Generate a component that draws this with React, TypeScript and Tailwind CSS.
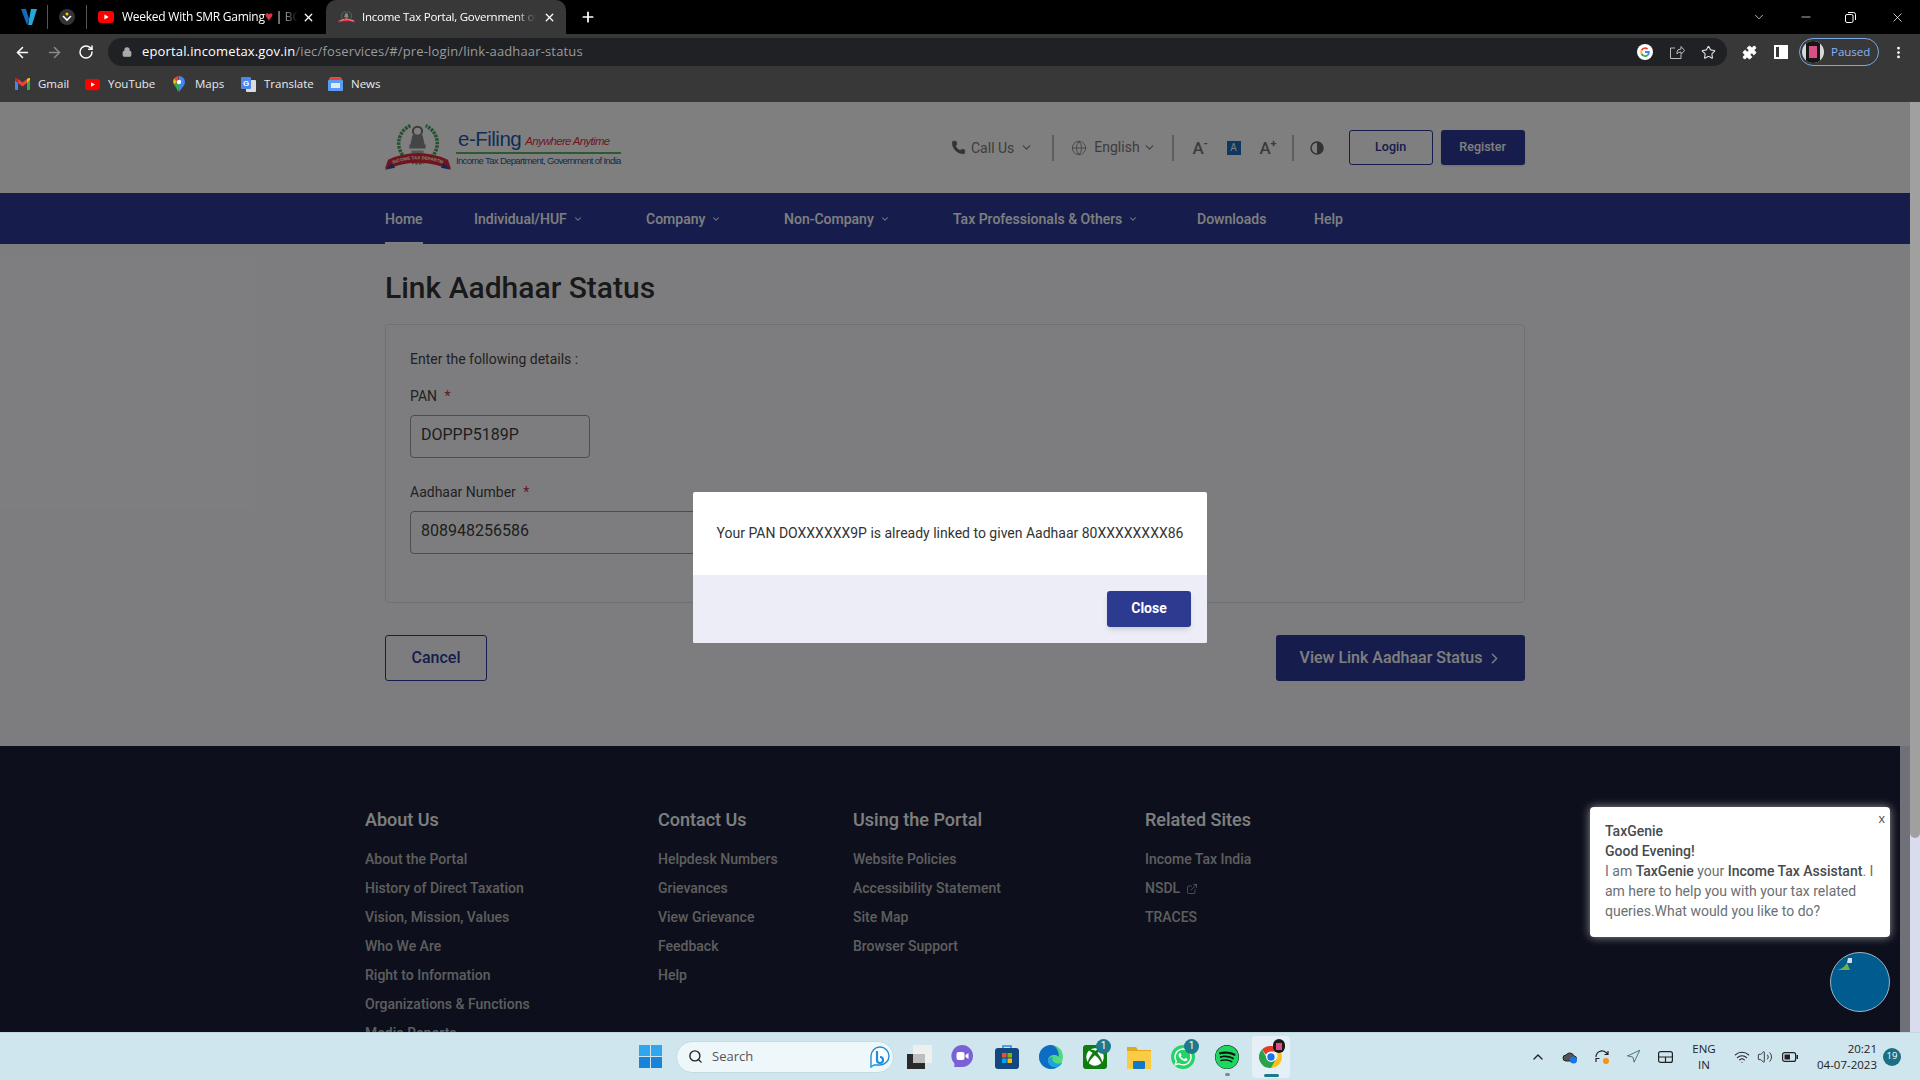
import React from "react";
import { Phone, Globe, ChevronDown, ChevronRight, ChevronUp, Search, Lock, ArrowLeft, ArrowRight, RotateCw, X, Plus, Minus, Star, Puzzle, MoreVertical, Wifi, Volume2, ExternalLink, Navigation } from "lucide-react";
import { FaWhatsapp, FaSpotify, FaXbox } from "react-icons/fa";

const sans = "font-['Roboto','Liberation_Sans',sans-serif]";
const ui = "font-['Open_Sans','Noto_Sans',sans-serif]";

function YT({ s = 15 }: { s?: number }) {
  return (
    <svg width={s} height={s} viewBox="0 0 16 16">
      <rect x="0" y="2" width="16" height="12" rx="3" fill="#f00" />
      <path d="M6.4 5.5v5L10.6 8z" fill="#fff" />
    </svg>
  );
}
function Emblem({ s = 16, id }: { s?: number; id: string }) {
  return (
    <svg width={Math.round((s * 65) / 46)} height={s} viewBox="0 0 65 46">
      <path d="M25 1.500a19 19 0 1 0 15 0" fill="none" stroke="#4aa35a" strokeWidth="3.5" strokeDasharray="2.5 1" />
      <circle cx="32" cy="7" r="4.500" fill="none" stroke="#777" strokeWidth="2" />
      <path d="M27 11h10l2 9H25zM24 20h16v4H24z" fill="#8a8a8a" />
      <path d="M26 26h12v3H26z" fill="#aaa" />
      <path d="M3 35q29-13 59 0l3 9-6-1q-27-10-53 0l-6 1z" fill="#e02a3a" />
      <path d="M0 45l7-6 3 4zM65 45l-7-6-3 4z" fill="#2a4aa0" />
      <defs>
        <path id={id} d="M7 39.500q25-10 51 0" />
      </defs>
      <text fontSize="4.4" fontWeight="700" fill="#fff" fontFamily="Liberation Sans">
        <textPath href={`#${id}`} startOffset="1">INCOME TAX DEPARTMENT</textPath>
      </text>
    </svg>
  );
}
function ChromeLogo({ s = 24 }: { s?: number }) {
  return (
    <svg width={s} height={s} viewBox="0 0 24 24">
      <path d="M12 1a11 11 0 0 1 9.500 5.500H12a5.500 5.500 0 0 0-5 3.200L3 4.500A11 11 0 0 1 12 1z" fill="#e33b2e" />
      <path d="M21.500 6.500A11 11 0 0 1 12 23l4.800-8.200a5.500 5.500 0 0 0 0-8.300z" fill="#fbc116" />
      <path d="M12 23A11 11 0 0 1 3 4.500l4.700 8.200a5.500 5.500 0 0 0 9 2.100L12 23z" fill="#2aa24a" />
      <circle cx="12" cy="12" r="4.300" fill="#1a73e8" stroke="#fff" strokeWidth="1.200" />
    </svg>
  );
}
function GoogleG({ s = 16 }: { s?: number }) {
  return (
    <svg width={s} height={s} viewBox="0 0 16 16">
      <circle cx="8" cy="8" r="8" fill="#fff" />
      <path d="M8 3.200a4.800 4.800 0 0 1 3.200 1.200l-1.200 1.200A3 3 0 0 0 5.200 7L3.800 5.800A4.800 4.800 0 0 1 8 3.200z" fill="#ea4335" />
      <path d="M3.800 5.800 5.200 7a3 3 0 0 0 0 2l-1.400 1.200a4.800 4.800 0 0 1 0-4.400z" fill="#fbbc05" />
      <path d="M3.800 10.200 5.200 9A3 3 0 0 0 10 10.600l1.300 1.100A4.800 4.800 0 0 1 3.800 10.200z" fill="#34a853" />
      <path d="M12.800 8c0-.3 0-.6-.1-.9H8v1.800h2.700a2.300 2.300 0 0 1-.7 1.700l1.300 1.100A4.800 4.800 0 0 0 12.800 8z" fill="#4285f4" />
    </svg>
  );
}
function Badge({ n }: { n: string }) {
  return (
    <span className={`absolute -right-[4px] -top-[6px] flex h-[15px] w-[15px] items-center justify-center rounded-full bg-[#1c7a8c] text-[10px] leading-none text-white ${sans}`}>{n}</span>
  );
}

function TabBar() {
  return (
    <div className="flex h-[34px] items-center bg-black text-white">
      <div className="flex w-[47px] justify-center pl-[10px]">
        <svg width="18" height="18" viewBox="0 0 18 18">
          <path d="M1 1h5l3 10-2 6z" fill="#1668b8" />
          <path d="M11 1h6l-5 16H8z" fill="#25a7d8" />
        </svg>
      </div>
      <div className="h-[24px] w-px bg-[#555]" />
      <div className="flex w-[38px] justify-center">
        <div className="flex h-[16px] w-[16px] items-center justify-center rounded-full bg-[#333]">
          <svg width="10" height="10" viewBox="0 0 10 10">
            <circle cx="5" cy="2" r="1.500" fill="#f2c200" />
            <path d="M1 4l4 4 4-4" stroke="#fff" strokeWidth="1.600" fill="none" />
          </svg>
        </div>
      </div>
      <div className="h-[24px] w-px bg-[#555]" />
      <div className="ml-[11px] flex w-[228px] items-center">
        <YT s={16} />
        <span className={`ml-[8px] w-[176px] overflow-hidden whitespace-nowrap text-[12px] tracking-[-0.25px] [mask-image:linear-gradient(90deg,#000_88%,transparent)] ${ui}`}>Weeked With SMR Gaming<span className="text-[14px] leading-none text-[#e3344a]">♥</span> | BGMI Live</span>
        <X size={13} strokeWidth={2.4} className="ml-[4px]" />
      </div>
      <div className="flex h-[34px] w-[240px] items-center rounded-t-[10px] bg-[#383838] pl-[12px]">
        <Emblem s={12} id="favRibbon" />
        <span className={`ml-[7px] w-[174px] overflow-hidden whitespace-nowrap text-[11.5px] tracking-[-0.25px] [mask-image:linear-gradient(90deg,#000_88%,transparent)] ${ui}`}>Income Tax Portal, Government of India</span>
        <X size={13} strokeWidth={2.4} className="ml-[7px]" />
      </div>
      <Plus size={16} strokeWidth={2.6} className="ml-[14px]" />
      <div className="ml-auto flex items-center text-white">
        <ChevronDown size={14} strokeWidth={1.2} className="mr-[33px]" />
        <Minus size={14} strokeWidth={1.2} className="mr-[32px]" />
        <svg width="11" height="11" viewBox="0 0 11 11" className="mr-[34px]">
          <rect x=".5" y="2.500" width="7.500" height="8" rx="1.500" fill="none" stroke="#fff" />
          <path d="M3 .5h5.500a2 2 0 0 1 2 2V8" fill="none" stroke="#fff" />
        </svg>
        <X size={15} strokeWidth={1.2} className="mr-[15px]" />
      </div>
    </div>
  );
}

function Toolbar() {
  return (
    <div className="flex h-[36px] items-center bg-[#383838] text-white">
      <ArrowLeft size={17} strokeWidth={2.2} className="ml-[14px]" />
      <ArrowRight size={17} strokeWidth={2.2} className="ml-[15px] text-[#888]" />
      <RotateCw size={16} strokeWidth={2.2} className="ml-[15px]" />
      <div className="ml-[14px] flex h-[28px] w-[1619px] items-center rounded-full bg-[#202124] pl-[14px]">
        <Lock size={10} strokeWidth={3} fill="#aaa" className="text-[#aaa]" />
        <span className={`ml-[10px] whitespace-nowrap text-[13px] tracking-[0.15px] ${ui}`}>
          eportal.incometax.gov.in<span className="text-[#9a9b9d]">/iec/foservices/#/pre-login/link-aadhaar-status</span>
        </span>
        <div className="ml-auto flex items-center pr-[11px]">
          <GoogleG s={16} />
          <svg width="16" height="16" viewBox="0 0 16 16" className="ml-[16px]" fill="none" stroke="#bbb">
            <path d="M8 10V8q0-3 4-3V2.500l3.500 4-3.500 4V8q-3 0-4 2z" />
            <path d="M6 4H1.500v10.500h10.500V11" />
          </svg>
          <Star size={15} strokeWidth={1.8} className="ml-[16px] text-[#ddd]" />
        </div>
      </div>
      <Puzzle size={15} fill="#fff" strokeWidth={1.5} className="ml-[15px]" />
      <div className="ml-[17px] flex h-[14px] w-[14px] justify-end border-[2px] border-white bg-[#383838]">
        <div className="h-full w-[7px] bg-white" />
      </div>
      <div className="ml-[11px] flex h-[28px] w-[80px] items-center rounded-full border border-[#7aa7e8] pl-[2px]">
        <div className="relative flex h-[22px] w-[22px] items-center justify-center overflow-hidden rounded-full bg-[#d8d8d8]">
          <div className="h-[22px] w-[14px] bg-[#161616]" />
          <div className="absolute h-[12px] w-[8px] bg-[#d94f86]" />
        </div>
        <span className={`ml-[7px] text-[11.5px] text-[#8ab4f8] ${ui}`}>Paused</span>
      </div>
      <MoreVertical size={15} strokeWidth={2.4} className="ml-[12px]" />
    </div>
  );
}

function Bookmark({ icon, label, w }: { icon: React.ReactNode; label: string; w: string }) {
  return (
    <div className={`flex items-center ${w}`}>
      <span className="flex w-[16px] justify-center">{icon}</span>
      <span className={`ml-[8px] whitespace-nowrap text-[11.5px] text-[#e8eaed] ${ui}`}>{label}</span>
    </div>
  );
}

function Bookmarks() {
  return (
    <div className="flex h-[32px] items-center bg-[#383838] pb-[4px] pl-[14px]">
      <Bookmark w="w-[70px]" label="Gmail" icon={
        <svg width="15" height="12" viewBox="0 0 15 12">
          <path d="M0 2v9a1 1 0 0 0 1 1h2V5z" fill="#4285f4" />
          <path d="M15 2v9a1 1 0 0 1-1 1h-2V5z" fill="#34a853" />
          <path d="M3 5 7.500 8.500 12 5V1L7.500 4.500 3 1z" fill="#ea4335" />
          <path d="M0 2 3 5V1L2 .3A1.200 1.200 0 0 0 0 2z" fill="#c5221f" />
          <path d="M15 2l-3 3V1l1-.7A1.200 1.200 0 0 1 15 2z" fill="#fbbc04" />
        </svg>
      } />
      <Bookmark w="w-[87px]" label="YouTube" icon={<YT s={15} />} />
      <Bookmark w="w-[69px]" label="Maps" icon={
        <svg width="12" height="16" viewBox="0 0 12 16">
          <path d="M6 0a6 6 0 0 1 6 6q0 3-3 6l-3 4-1-6z" fill="#4285f4" />
          <path d="M6 0a6 6 0 0 0-5 2.600L4 6z" fill="#ea4335" />
          <path d="M1 2.600A6 6 0 0 0 1 8.500L4 6z" fill="#fbbc04" />
          <path d="M1 8.500 4 6l3 2-2 8q-1-3-4-7.500z" fill="#34a853" />
          <circle cx="6" cy="6" r="2.200" fill="#fff" />
        </svg>
      } />
      <Bookmark w="w-[87px]" label="Translate" icon={
        <svg width="15" height="15" viewBox="0 0 15 15">
          <rect x="5" y="3" width="10" height="12" rx="1" fill="#dcdcdc" />
          <rect x="0" y="0" width="10" height="12" rx="1" fill="#4f86ec" />
          <text x="2" y="9" fontSize="8" fontWeight="700" fill="#fff" fontFamily="Liberation Sans">G</text>
        </svg>
      } />
      <Bookmark w="w-[70px]" label="News" icon={
        <svg width="15" height="14" viewBox="0 0 15 14">
          <rect x="2" y="0" width="11" height="6" rx="1" fill="#34a853" />
          <rect x="1" y="1" width="13" height="5" fill="#ea4335" />
          <rect x="0" y="3" width="15" height="11" rx="1" fill="#5b9bf0" />
          <rect x="3" y="6" width="9" height="5" fill="#dbe9fb" />
        </svg>
      } />
    </div>
  );
}

function SiteHeader() {
  return (
    <div className="flex h-[91px] items-center bg-white pl-[385px]">
      <Emblem s={47} id="logoRibbon" />
      <div className="ml-[5px] flex w-[165px] flex-col pb-[2px]">
        <div className="flex h-[24px] items-end pl-[2px]">
          <span className="font-['Liberation_Sans',sans-serif] text-[20.5px] leading-[24px] tracking-[-0.5px] text-[#1c5ab0]">e-Filing</span>
          <span className="ml-[4px] whitespace-nowrap font-['Liberation_Sans',sans-serif] text-[11.5px] italic leading-[20px] tracking-[-0.7px] text-[#e0303e]">Anywhere Anytime</span>
        </div>
        <div className="mt-[1px] h-[2px] bg-[#5fb45f]" />
        <span className="mt-[1px] whitespace-nowrap font-['Liberation_Sans',sans-serif] text-[9.5px] leading-[12px] tracking-[-0.65px] text-[#2a5a90]">Income Tax Department, Government of India</span>
      </div>
      <div className={`ml-[330px] flex items-center text-[14px] text-[#7b7b7b] ${sans}`}>
        <Phone size={15} fill="#666" strokeWidth={1} className="text-[#666]" />
        <span className="ml-[5px] pt-[2px]">Call Us</span>
        <ChevronDown size={13} className="ml-[6px]" />
        <div className="ml-[19px] h-[26px] w-[2px] bg-[#bdbdbd]" />
        <Globe size={16} strokeWidth={1.2} className="ml-[17px]" />
        <span className="ml-[7px]">English</span>
        <ChevronDown size={13} className="ml-[3px]" />
        <div className="ml-[16px] h-[26px] w-[2px] bg-[#bdbdbd]" />
        <span className="relative ml-[19px] w-[15px] text-[17px] font-medium leading-[20px] text-[#777]">A<span className="absolute -top-[4px] left-[11px] text-[11px] font-bold">-</span></span>
        <span className="ml-[19px] flex h-[14px] w-[14px] items-center justify-center bg-[#1f6fc0] text-[10px] text-white">A</span>
        <span className="relative ml-[19px] w-[15px] text-[17px] font-medium leading-[20px] text-[#777]">A<span className="absolute -top-[4px] left-[11px] text-[11px] font-bold">+</span></span>
        <div className="ml-[17px] h-[26px] w-[2px] bg-[#bdbdbd]" />
        <svg width="14" height="14" viewBox="0 0 14 14" className="ml-[16px]">
          <circle cx="7" cy="7" r="6" fill="none" stroke="#666" strokeWidth="1.500" />
          <path d="M7 1a6 6 0 0 1 0 12z" fill="#666" />
        </svg>
        <div className="ml-[25px] flex h-[35px] w-[84px] items-center justify-center rounded-[3px] border border-[#2c3a98] text-[12.5px] font-medium text-[#2c3a98]">Login</div>
        <div className="ml-[8px] flex h-[35px] w-[84px] items-center justify-center rounded-[3px] bg-[#2c3a98] text-[12.5px] font-medium text-white shadow-sm">Register</div>
      </div>
    </div>
  );
}

function NavItem({ label, w, caret, active }: { label: string; w: string; caret?: boolean; active?: boolean }) {
  return (
    <div className={`flex h-full ${w}`}>
      <div className={`flex h-full items-center border-b-[2px] pt-[4px] ${active ? "border-white" : "border-transparent"}`}>
        <span>{label}</span>
        {caret && <ChevronDown size={10} strokeWidth={2.5} className="mb-[2px] ml-[6px]" />}
      </div>
    </div>
  );
}

function Nav() {
  return (
    <div className={`flex h-[51px] bg-[#2c3a98] pl-[385px] text-[14px] font-medium text-white ${sans}`}>
      <NavItem label="Home" w="w-[89px]" active />
      <NavItem label="Individual/HUF" w="w-[172px]" caret />
      <NavItem label="Company" w="w-[138px]" caret />
      <NavItem label="Non-Company" w="w-[169px]" caret />
      <NavItem label="Tax Professionals & Others" w="w-[244px]" caret />
      <NavItem label="Downloads" w="w-[117px]" />
      <NavItem label="Help" w="w-[60px]" />
    </div>
  );
}

function Body() {
  return (
    <div className={`h-[502px] bg-[#fbfbff] pl-[385px] ${sans}`}>
      <div className="h-[80px] pt-[24px] text-[30px] font-medium leading-[40px] text-[#333]">Link Aadhaar Status</div>
      <div className="h-[279px] w-[1140px] rounded-[4px] border border-[#dfe1ee] bg-[#fbfbff] pl-[24px] pt-[24px] text-[14px] text-[#444]">
        <div className="leading-[20px]">Enter the following details :</div>
        <div className="mt-[17px] leading-[20px]">PAN <span className="ml-[4px] text-[#c9304a]">*</span></div>
        <div className="mt-[9px] flex h-[43px] w-[180px] items-center rounded-[4px] border border-[#9a9a9a] pb-[3px] pl-[10px] text-[16px] text-[#3d3d3d]">DOPPP5189P</div>
        <div className="mt-[24px] leading-[20px]">Aadhaar Number <span className="ml-[4px] text-[#c9304a]">*</span></div>
        <div className="mt-[9px] flex h-[43px] w-[400px] items-center rounded-[4px] border border-[#9a9a9a] pb-[3px] pl-[10px] text-[16px] text-[#3d3d3d]">808948256586</div>
      </div>
      <div className="mt-[32px] flex w-[1140px] justify-between text-[16px] font-medium">
        <div className="flex h-[46px] w-[102px] items-center justify-center rounded-[3px] border border-[#2c3a98] text-[#2c3a98]">Cancel</div>
        <div className="flex h-[46px] w-[249px] items-center justify-center rounded-[3px] bg-[#2c3a98] pl-[2px] text-white">
          View Link Aadhaar Status
          <ChevronRight size={17} strokeWidth={2} className="ml-[4px]" />
        </div>
      </div>
    </div>
  );
}

function FooterCol({ title, links, w }: { title: string; links: React.ReactNode[]; w: string }) {
  return (
    <div className={w}>
      <div className="text-[18px] font-medium leading-[24px] text-white">{title}</div>
      <div className="mt-[13px] text-[14px] font-medium text-[#bdbdbd]">
        {links.map((l, i) => (
          <div key={i} className="flex h-[29px] items-center">{l}</div>
        ))}
      </div>
    </div>
  );
}

function Footer() {
  return (
    <div className="h-[286px] bg-[#dfe0f0]">
      <div className={`flex h-[286px] w-[1900px] overflow-hidden bg-[#1a2038] pl-[365px] pt-[62px] ${sans}`}>
        <FooterCol w="w-[293px]" title="About Us" links={["About the Portal", "History of Direct Taxation", "Vision, Mission, Values", "Who We Are", "Right to Information", "Organizations & Functions", "Media Reports"]} />
        <FooterCol w="w-[195px]" title="Contact Us" links={["Helpdesk Numbers", "Grievances", "View Grievance", "Feedback", "Help"]} />
        <FooterCol w="w-[292px]" title="Using the Portal" links={["Website Policies", "Accessibility Statement", "Site Map", "Browser Support"]} />
        <FooterCol w="w-[200px]" title="Related Sites" links={[
          "Income Tax India",
          <span key="n" className="flex items-center">NSDL <ExternalLink size={12} strokeWidth={1.5} className="ml-[6px]" /></span>,
          "TRACES",
        ]} />
      </div>
    </div>
  );
}

function Modal() {
  return (
    <div className={`absolute inset-0 z-10 flex items-center justify-center bg-black/50 pr-[10px] ${sans}`}>
      <div className="h-[151px] w-[514px] overflow-hidden rounded-[2px] bg-white">
        <div className="flex h-[83px] items-center justify-center pt-[1px] text-[14px] text-[#333]">
          Your PAN DOXXXXXX9P is already linked to given Aadhaar 80XXXXXXXX86
        </div>
        <div className="flex h-[68px] items-start justify-end bg-[#ecedf6] pr-[16px] pt-[16px]">
          <div className="flex h-[36px] w-[84px] items-center justify-center rounded-[3px] bg-[#2c3a8f] text-[14px] font-bold text-white shadow-md">Close</div>
        </div>
      </div>
    </div>
  );
}

function Chat() {
  return (
    <>
      <div className={`absolute left-[1590px] top-[705px] z-20 h-[130px] w-[300px] rounded-[4px] bg-white pl-[15px] pt-[14px] text-[14px] leading-[20px] text-[#6a7074] shadow-[0_0_10px_rgba(255,255,255,0.55)] ${sans}`}>
        <span className="absolute right-[5px] top-[4px] font-['Liberation_Sans',sans-serif] text-[13px] leading-[16px] text-[#555]">x</span>
        <div className="font-medium text-[#464b4f]">TaxGenie</div>
        <div className="font-medium text-[#464b4f]">Good Evening!</div>
        <div className="w-[275px]">I am <span className="font-medium text-[#464b4f]">TaxGenie</span> your <span className="font-medium text-[#464b4f]">Income Tax Assistant</span>. I am here to help you with your tax related queries.What would you like to do?</div>
      </div>
      <div className="absolute left-[1830px] top-[850px] z-20 h-[60px] w-[60px] overflow-hidden rounded-full border border-[#9fb4c4] bg-[#005b8f]">
        <svg width="18" height="18" viewBox="0 0 18 18" className="ml-[3px] mt-[3px]">
          <path d="M14 2l4 0v5H13z" fill="#cfe0ee" />
          <path d="M3 14q6-1 10-7l3 7z" fill="#6fb04a" />
        </svg>
      </div>
    </>
  );
}

function Scrollbar() {
  return (
    <div className="h-full w-[10px] bg-[#d9dcec]">
      <div className="h-[736px] rounded-b-[5px] bg-[#a0a0a0]" />
    </div>
  );
}

function TaskIcon({ children, active, dot }: { children: React.ReactNode; active?: boolean; dot?: boolean }) {
  return (
    <div className="relative flex h-[42px] w-[44px] items-center justify-center">
      {active && <div className="absolute inset-y-0 left-[3px] right-[3px] rounded-[4px] bg-[#e4f0f5]" />}
      <div className="relative flex">{children}</div>
      {dot && <div className="absolute bottom-[2px] h-[3px] w-[5px] rounded-full bg-[#7c8c93]" />}
      {active && <div className="absolute bottom-[1px] h-[3px] w-[15px] rounded-full bg-[#1c7a8c]" />}
    </div>
  );
}

function Taskbar() {
  return (
    <div className={`flex h-[48px] items-center border-t border-[#c0d8e0] bg-[#cfe6ee] ${ui}`}>
      <div className="ml-[639px] grid h-[23px] w-[23px] grid-cols-2 gap-[1px]">
        <div className="bg-[#2fa6ee]" />
        <div className="bg-[#2fa6ee]" />
        <div className="bg-[#1883d8]" />
        <div className="bg-[#1883d8]" />
      </div>
      <div className="ml-[14px] flex h-[32px] w-[218px] items-center rounded-full border border-[#c4dbe3] bg-[#eef7fa] pl-[11px]">
        <Search size={15} strokeWidth={2.2} className="text-[#222]" />
        <span className="ml-[9px] text-[13px] text-[#555]">Search</span>
        <svg width="22" height="24" viewBox="0 0 22 24" className="ml-auto mr-[2px]">
          <path d="M11 2a9 9 0 0 1 9 9 9 9 0 0 1-9 9H5l-3 2V11a9 9 0 0 1 9-9z" fill="#fff" stroke="#1a8fe0" strokeWidth="1.400" />
          <path d="M8 6v9a3 3 0 1 0 3-3" fill="none" stroke="#1a8fe0" strokeWidth="2.200" />
        </svg>
      </div>
      <div className="ml-[3px] flex items-center">
        <TaskIcon>
          <div className="relative h-[24px] w-[25px]">
            <div className="absolute left-[6px] top-0 h-[18px] w-[19px] bg-[#efefef]" />
            <div className="absolute bottom-0 left-0 h-[15px] w-[18px] bg-[#2a2a2a]" />
            <div className="absolute left-[6px] top-[9px] h-[9px] w-[12px] bg-[#bdbdbd]" />
          </div>
        </TaskIcon>
        <TaskIcon>
          <svg width="24" height="26" viewBox="0 0 24 26" className="-translate-x-[1px]">
            <path d="M12 1a11 11 0 0 1 0 22H4q1-2 0-4a11 11 0 0 1 8-18z" fill="#7b61d6" />
            <rect x="6.500" y="8" width="8" height="8" rx="2" fill="#fff" />
            <path d="M15.500 11l3-2v6l-3-2z" fill="#fff" />
          </svg>
        </TaskIcon>
        <TaskIcon>
          <svg width="24" height="25" viewBox="0 0 24 25">
            <path d="M8 5V2h8v3" fill="none" stroke="#2a8ad8" strokeWidth="1.500" />
            <rect x="0" y="4" width="24" height="21" rx="3" fill="#12477f" />
            <rect x="7" y="9" width="4.500" height="4.500" fill="#f25022" />
            <rect x="12.500" y="9" width="4.500" height="4.500" fill="#7fba00" />
            <rect x="7" y="14.500" width="4.500" height="4.500" fill="#00a4ef" />
            <rect x="12.500" y="14.500" width="4.500" height="4.500" fill="#ffb900" />
          </svg>
        </TaskIcon>
        <TaskIcon>
          <svg width="24" height="24" viewBox="0 0 24 24">
            <defs>
              <linearGradient id="edgeG" x1="0" y1="0" x2="1" y2="1">
                <stop offset="0" stopColor="#36c98a" />
                <stop offset="1" stopColor="#5fe27a" />
              </linearGradient>
            </defs>
            <circle cx="12" cy="12" r="12" fill="url(#edgeG)" />
            <path d="M12 0A12 12 0 0 0 0 12c0 7 6 12 12 12 3 0 5-1 7-2-5 1-10-2-10-7 0-3 3-5 6-5 4 0 5 2 5 2 0-7-4-12-8-12z" fill="#0f6cc4" />
            <path d="M9 15c0 5 5 8 10 7 2-1 4-3 4-5-2 2-6 2-8 0-2-1-2-3-1-5-3 0-5 1-5 3z" fill="#1aa4e0" />
          </svg>
        </TaskIcon>
        <TaskIcon>
          <div className="flex h-[24px] w-[24px] items-center justify-center rounded-[3px] bg-[#107c10]">
            <FaXbox size={18} className="text-white" />
          </div>
          <Badge n="1" />
        </TaskIcon>
        <TaskIcon>
          <svg width="24" height="24" viewBox="0 0 24 24">
            <path d="M0 2h9l2 3h13v19H0z" fill="#e2a71c" />
            <rect x="0" y="6" width="24" height="18" fill="#fbcb43" />
            <rect x="6" y="16" width="12" height="8" rx="1" fill="#1479c4" />
          </svg>
        </TaskIcon>
        <TaskIcon>
          <div className="flex h-[24px] w-[24px] items-center justify-center rounded-full bg-[#25d366]">
            <FaWhatsapp size={20} className="text-white" />
          </div>
          <Badge n="1" />
        </TaskIcon>
        <TaskIcon dot>
          <FaSpotify size={24} className="rounded-full bg-[#111] text-[#1ed760]" />
        </TaskIcon>
        <TaskIcon active>
          <ChromeLogo s={24} />
          <div className="absolute right-[-2px] top-[-6px] h-[14px] w-[12px] rounded-full bg-[#1a1a1a]">
            <div className="ml-[3px] mt-[4px] h-[7px] w-[6px] bg-[#d94f86]" />
          </div>
        </TaskIcon>
      </div>
      <div className="ml-[237px] flex items-center text-[#222]">
        <ChevronUp size={16} strokeWidth={2} />
        <svg width="16" height="14" viewBox="0 0 16 14" className="ml-[16px]">
          <path d="M4 11a3 3 0 0 1 0-6 4.500 4.500 0 0 1 8 1 2.500 2.500 0 0 1 0 5z" fill="#555" stroke="#222" />
          <circle cx="11.500" cy="10" r="3.500" fill="#1a73e8" />
        </svg>
        <svg width="16" height="16" viewBox="0 0 16 16" className="ml-[16px]" fill="none" stroke="#222" strokeWidth="1.200">
          <path d="M2 8a6 6 0 0 1 10-4.500l2 2M14 2v3.500h-3.500M2 13v-3.500h3.500" />
          <circle cx="12" cy="12" r="3" fill="#f7930e" stroke="none" />
        </svg>
        <Navigation size={15} strokeWidth={1.2} className="ml-[16px] text-[#1d4f66]" />
        <svg width="15" height="12" viewBox="0 0 15 12" className="ml-[17px]" fill="none" stroke="#222" strokeWidth="1.200">
          <rect x=".6" y=".6" width="13.800" height="10.800" rx="2" />
          <path d="M.6 6h13.800M7.500 6v5" />
        </svg>
        <div className="ml-[17px] w-[28px] text-center text-[11.5px] leading-[16px]">ENG<br />IN</div>
        <Wifi size={16} strokeWidth={1.6} className="ml-[16px]" />
        <Volume2 size={16} strokeWidth={1.3} className="ml-[7px]" />
        <svg width="16" height="10" viewBox="0 0 16 10" className="ml-[9px]">
          <rect x=".6" y=".6" width="13" height="8.800" rx="2" fill="none" stroke="#222" strokeWidth="1.200" />
          <rect x="2.500" y="2.500" width="5.500" height="5" fill="#222" />
          <rect x="14.500" y="3" width="1.500" height="4" fill="#222" />
        </svg>
        <div className="ml-[10px] w-[69px] whitespace-nowrap text-right text-[11.5px] leading-[16px]">20:21<br />04-07-2023</div>
        <span className="ml-[6px] flex h-[18px] w-[18px] items-center justify-center rounded-full bg-[#1c6f80] text-[9.5px] text-white">19</span>
      </div>
    </div>
  );
}

export default function App() {
  return (
    <div className="flex h-[1080px] w-[1920px] flex-col overflow-hidden">
      <TabBar />
      <Toolbar />
      <Bookmarks />
      <div className="relative flex h-[930px]">
        <div className="relative h-full w-[1910px] overflow-hidden">
          <SiteHeader />
          <Nav />
          <Body />
          <Footer />
          <Modal />
        </div>
        <Scrollbar />
        <Chat />
      </div>
      <Taskbar />
    </div>
  );
}
